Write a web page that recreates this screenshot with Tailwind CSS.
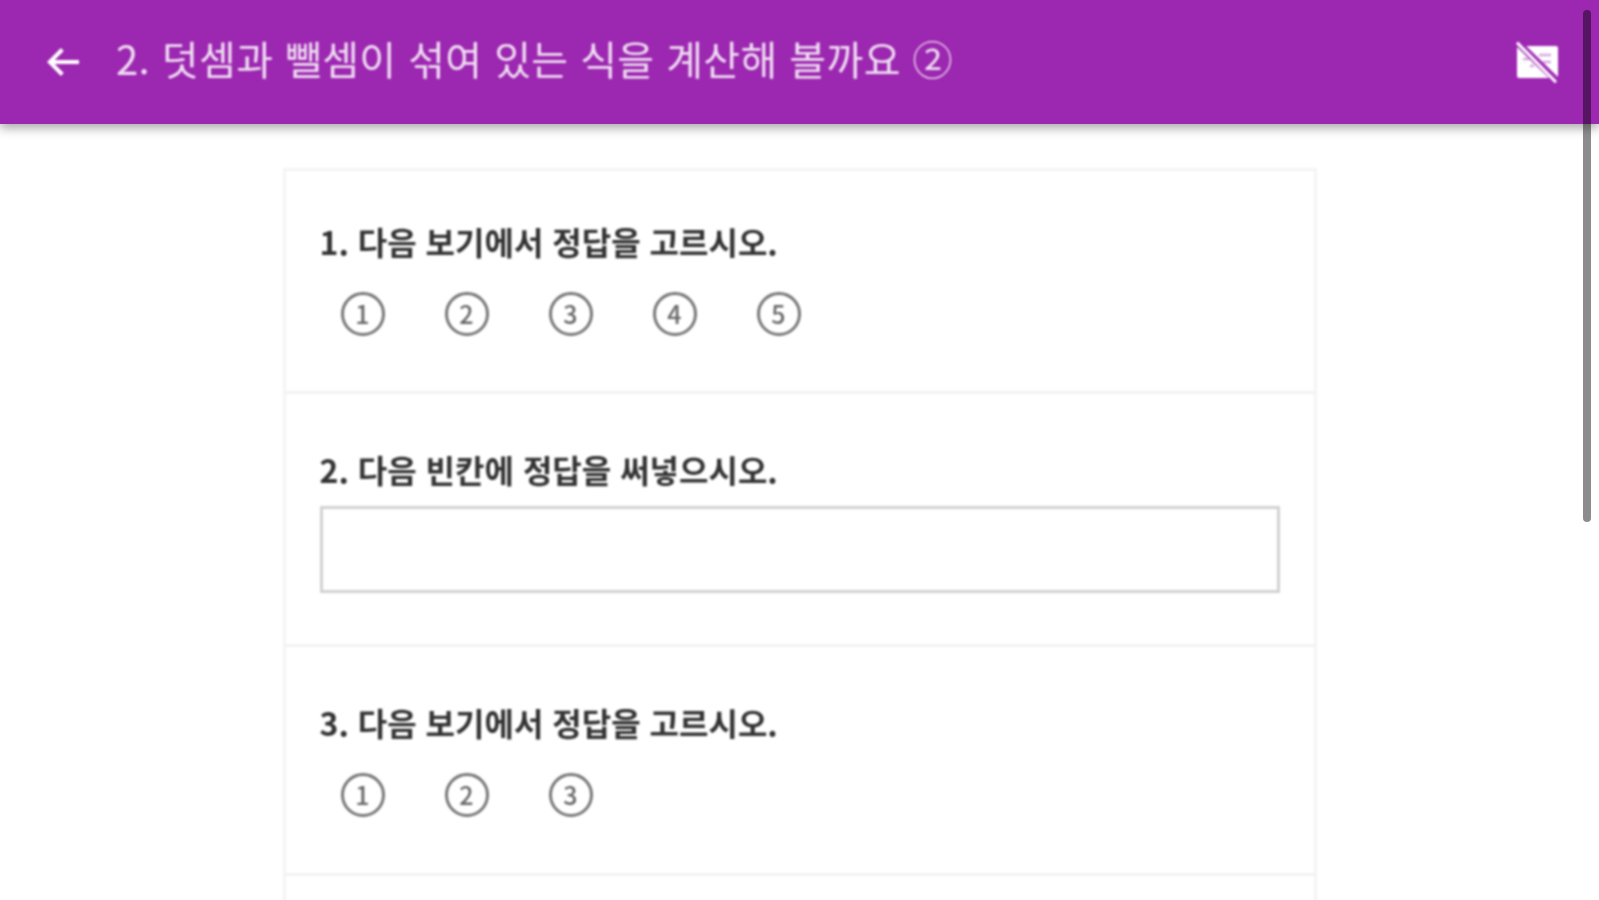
<!DOCTYPE html>
<html lang="ko">
<head>
<meta charset="utf-8">
<script src="https://cdn.jsdelivr.net/npm/@tailwindcss/browser@4"></script>
</head>
<body class="h-[900px] overflow-hidden bg-white font-['Noto_Sans_CJK_KR','Noto_Sans',sans-serif]">
<div class="relative h-[900px] overflow-hidden">
  <header class="relative z-10 flex h-[124px] items-center bg-[#9c27b0] pl-[44px] pr-[38px] shadow-[0_4px_10px_rgba(0,0,0,0.35)]">
    <svg class="h-[40px] w-[40px] shrink-0 blur-[0.8px]" viewBox="0 0 24 24" fill="none" stroke="#fff" stroke-width="2.4"><path d="M21 12H4M11 4.5 3.5 12l7.5 7.5"/></svg>
    <h1 class="ml-[32px] flex-1 text-[40px] leading-none tracking-[0.4px] text-white/85 mt-[-8px] blur-[0.8px]">2. 덧셈과 뺄셈이 섞여 있는 식을 계산해 볼까요 ②</h1>
    <svg class="h-[48px] w-[48px] shrink-0 mt-[2px] blur-[0.8px]" viewBox="0 0 24 24">
      <rect x="2" y="3.5" width="20.5" height="16" rx="1" fill="#fff"/>
      <path d="M5 10h3M8.5 13.5h2M13 8h6M15 11.5h4" stroke="#d9a6e2" stroke-width="1.2"/>
      <path d="M3 2.5 22 21" stroke="#9c27b0" stroke-width="3.6"/>
      <path d="M2 1.8 21.5 21.6" stroke="#fff" stroke-width="1.5"/>
    </svg>
  </header>
  <main class="mx-auto mt-[44px] w-[1034px] border-x-[3px] border-t-[3px] border-[#f4f4f4] blur-[0.8px]">
    <section class="h-[223px] border-b-[3px] border-[#f2f2f2] px-[34px] pt-[48px]">
      <p class="text-[32px] leading-[44px] font-semibold tracking-[0px] text-[#333]">1. 다음 보기에서 정답을 고르시오.</p>
      <div class="mt-[29px] flex gap-[60px] pl-[21px]">
        <span class="flex h-[44px] w-[44px] items-center justify-center rounded-full border-[3px] border-[#777] text-[25px] font-medium text-[#666]">1</span>
        <span class="flex h-[44px] w-[44px] items-center justify-center rounded-full border-[3px] border-[#777] text-[25px] font-medium text-[#666]">2</span>
        <span class="flex h-[44px] w-[44px] items-center justify-center rounded-full border-[3px] border-[#777] text-[25px] font-medium text-[#666]">3</span>
        <span class="flex h-[44px] w-[44px] items-center justify-center rounded-full border-[3px] border-[#777] text-[25px] font-medium text-[#666]">4</span>
        <span class="flex h-[44px] w-[44px] items-center justify-center rounded-full border-[3px] border-[#777] text-[25px] font-medium text-[#666]">5</span>
      </div>
    </section>
    <section class="h-[253px] border-b-[3px] border-[#f2f2f2] px-[34px] pt-[53px]">
      <p class="text-[32px] leading-[44px] font-semibold tracking-[0px] text-[#333]">2. 다음 빈칸에 정답을 써넣으시오.</p>
      <div class="mt-[15px] h-[87px] w-[960px] border-[3px] border-[#d2d2d2] bg-white"></div>
    </section>
    <section class="h-[229px] border-b-[3px] border-[#f2f2f2] px-[34px] pt-[53px]">
      <p class="text-[32px] leading-[44px] font-semibold tracking-[0px] text-[#333]">3. 다음 보기에서 정답을 고르시오.</p>
      <div class="mt-[29px] flex gap-[60px] pl-[21px]">
        <span class="flex h-[44px] w-[44px] items-center justify-center rounded-full border-[3px] border-[#777] text-[25px] font-medium text-[#666]">1</span>
        <span class="flex h-[44px] w-[44px] items-center justify-center rounded-full border-[3px] border-[#777] text-[25px] font-medium text-[#666]">2</span>
        <span class="flex h-[44px] w-[44px] items-center justify-center rounded-full border-[3px] border-[#777] text-[25px] font-medium text-[#666]">3</span>
      </div>
    </section>
    <section class="h-[200px]"></section>
  </main>
  <div class="absolute right-[8px] top-[10px] z-20 h-[512px] w-[8px] rounded-full bg-black/45"></div>
</div>
</body>
</html>
